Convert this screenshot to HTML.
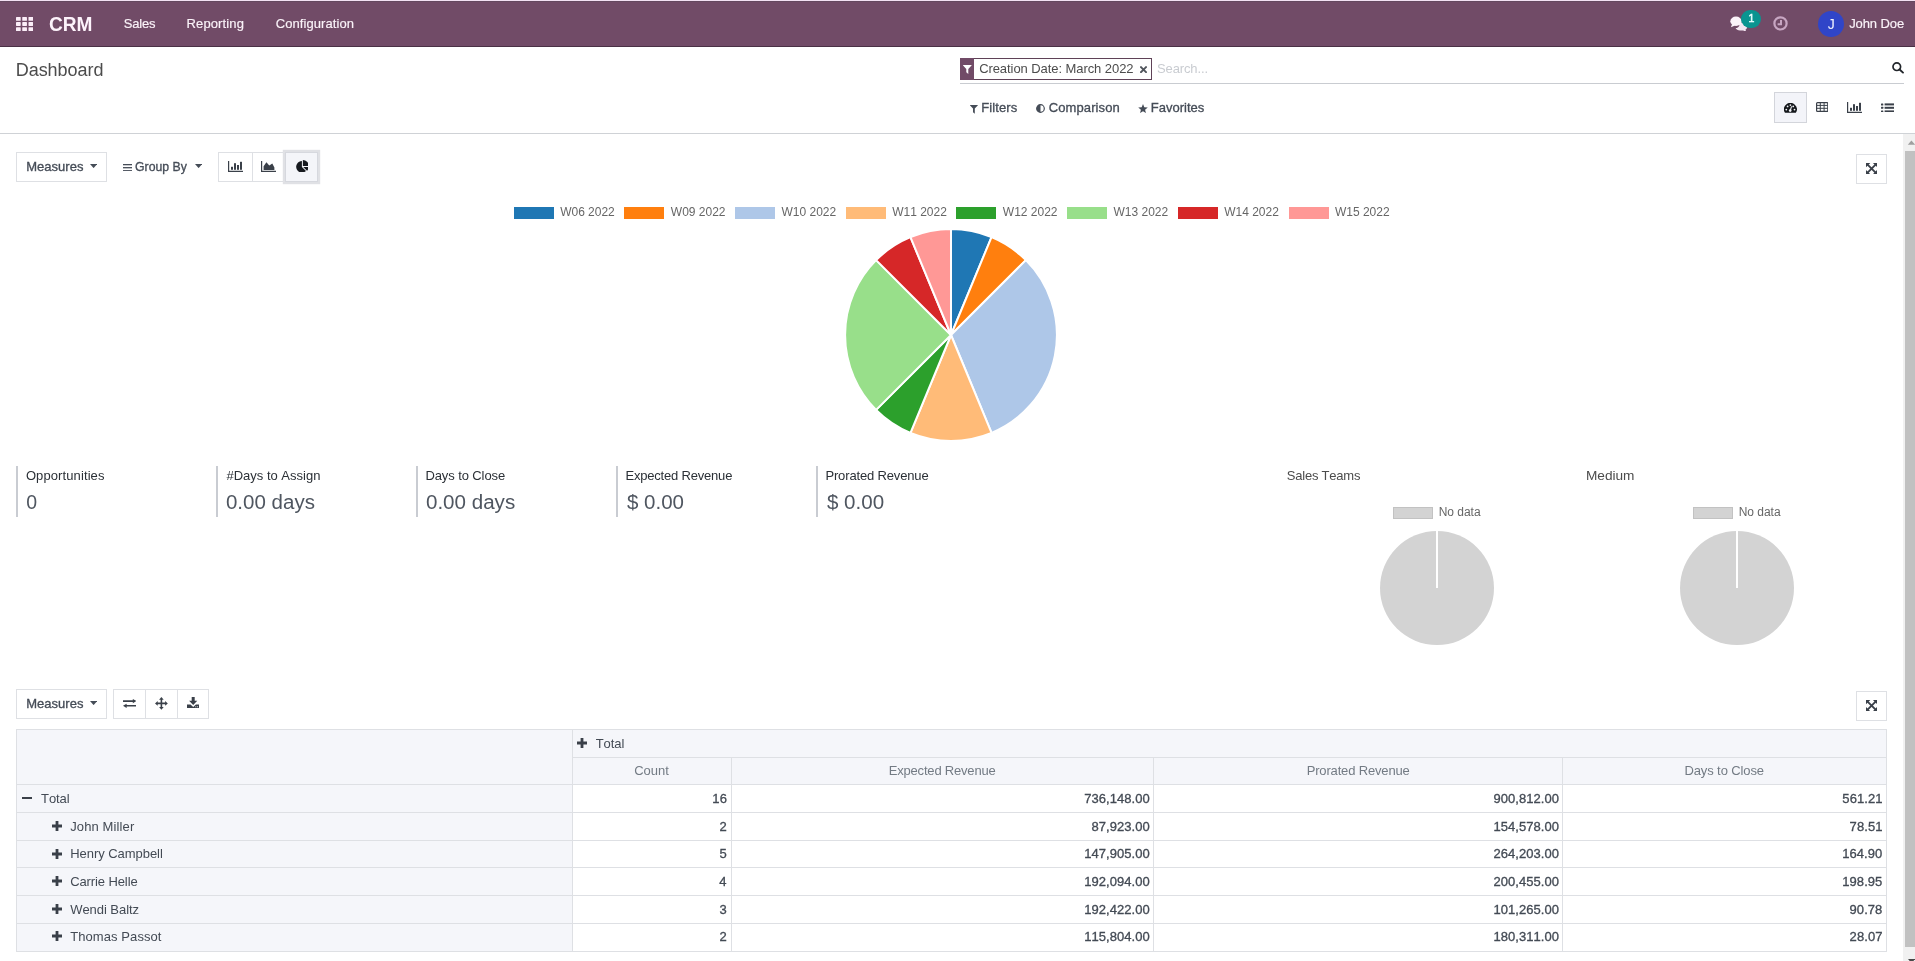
<!DOCTYPE html>
<html lang="en"><head><meta charset="utf-8"><title>Odoo - Dashboard</title>
<style>
html,body{margin:0;padding:0}
body{width:1915px;height:961px;overflow:hidden;position:relative;background:#fff;font-family:"Liberation Sans",sans-serif;font-kerning:none;-webkit-font-smoothing:antialiased}
.b{position:absolute;display:block;box-sizing:border-box}
.t{position:absolute;display:block;white-space:pre;font-kerning:none}
#app{position:absolute;left:0;top:0;width:1915px;height:961px;will-change:transform}
</style></head><body><div id="app">
<div class="b" style="left:0px;top:0px;width:1915px;height:1px;background:#f3e1f3"></div>
<div class="b" style="left:0px;top:1px;width:1915px;height:46px;background:#714B67;border-bottom:1px solid #4a3145"></div>
<div class="b" style="left:0px;top:1px;width:1915px;height:1px;background:#64485f"></div>
<svg class="b" style="left:16px;top:17px;" width="17.2" height="14" viewBox="0 0 17.2 14"><rect x="0" y="0" width="4.7" height="3.8" rx="0.6" fill="#fbeef8"/><rect x="6.25" y="0" width="4.7" height="3.8" rx="0.6" fill="#fbeef8"/><rect x="12.5" y="0" width="4.7" height="3.8" rx="0.6" fill="#fbeef8"/><rect x="0" y="5.1" width="4.7" height="3.8" rx="0.6" fill="#fbeef8"/><rect x="6.25" y="5.1" width="4.7" height="3.8" rx="0.6" fill="#fbeef8"/><rect x="12.5" y="5.1" width="4.7" height="3.8" rx="0.6" fill="#fbeef8"/><rect x="0" y="10.2" width="4.7" height="3.8" rx="0.6" fill="#fbeef8"/><rect x="6.25" y="10.2" width="4.7" height="3.8" rx="0.6" fill="#fbeef8"/><rect x="12.5" y="10.2" width="4.7" height="3.8" rx="0.6" fill="#fbeef8"/></svg>
<span class="t" style="left:48.98px;top:14.00px;font-size:20px;line-height:20px;color:#fdf3fb;font-weight:bold;transform:scaleX(0.9542);transform-origin:0.82px 0;">CRM</span>
<span class="t" style="left:123.74px;top:17.10px;font-size:13px;line-height:13px;color:#fbf3f9;font-weight:normal;-webkit-text-stroke:0.16px #fbf3f9;letter-spacing:-0.180px;">Sales</span>
<span class="t" style="left:186.56px;top:17.10px;font-size:13px;line-height:13px;color:#fbf3f9;font-weight:normal;-webkit-text-stroke:0.16px #fbf3f9;letter-spacing:0.122px;">Reporting</span>
<span class="t" style="left:275.77px;top:17.10px;font-size:13px;line-height:13px;color:#fbf3f9;font-weight:normal;-webkit-text-stroke:0.16px #fbf3f9;letter-spacing:0.068px;">Configuration</span>
<svg class="b" style="left:1730px;top:16px;" width="18" height="15" viewBox="0 0 18 15"><path d="M12.2 6.6c-1.2 0-2.3.3-3.2.8 1.500 2.900-1.600 4.700-3.400 4.600.6 1.300 2.300 2.300 4.400 2.500l3.200.1 3.300 1.300-1.100-2.100c1.100-.7 1.800-1.800 1.800-2.900 0-2.400-2.200-4.300-5-4.300z" fill="#f4e6f1"/><ellipse cx="6" cy="5.300" rx="5.700" ry="4.700" fill="#fbf3f9"/><path d="M2 8.2L.9 11.300l4.300-1.800z" fill="#fbf3f9"/></svg>
<div class="b" style="left:1741px;top:10px;width:19.5px;height:18.2px;background:#0a9490;border-radius:9.2px"></div>
<span class="t" style="left:1748.40px;top:12.90px;font-size:10.5px;line-height:11px;color:#e7ffff;font-weight:normal;-webkit-text-stroke:0.55px #e7ffff;">1</span>
<svg class="b" style="left:1773px;top:16px;" width="15" height="15" viewBox="0 0 15 15"><circle cx="7.5" cy="7.4" r="6.1" fill="none" stroke="#c7a6c2" stroke-width="2.2"/><path d="M8 3.900V8.300H4.600" fill="none" stroke="#c7a6c2" stroke-width="2"/></svg>
<div class="b" style="left:1818px;top:11px;width:26px;height:26px;background:#3045c8;border-radius:13px"></div>
<span class="t" style="left:1827.68px;top:17.20px;font-size:14px;line-height:14px;color:#f4f6ff;font-weight:normal;">J</span>
<span class="t" style="left:1849.23px;top:17.10px;font-size:13px;line-height:13px;color:#fbf3f9;font-weight:normal;-webkit-text-stroke:0.16px #fbf3f9;letter-spacing:-0.104px;">John Doe</span>
<div class="b" style="left:0px;top:133px;width:1915px;height:1px;background:#cfd2d6"></div>
<span class="t" style="left:15.72px;top:60.90px;font-size:18px;line-height:18px;color:#4c4c4c;font-weight:normal;letter-spacing:-0.040px;">Dashboard</span>
<div class="b" style="left:960px;top:58px;width:192px;height:22px;border:1px solid #5f4257;background:#fff"></div>
<div class="b" style="left:960px;top:58px;width:14px;height:22px;background:#714B67"></div>
<svg class="b" style="left:963px;top:64.8px;" width="8.6" height="9" viewBox="0 0 8.6 9"><path d="M.2 0h8.200c.3 0 .3.300.1.500L5.300 3.900V8.900L3.300 7.300V3.900L.1.500C-.1.300-.1 0 .2 0z" fill="#fff"/></svg>
<span class="t" style="left:979.14px;top:62.10px;font-size:13px;line-height:13px;color:#4c4c4c;font-weight:normal;letter-spacing:-0.070px;">Creation Date: March 2022</span>
<svg class="b" style="left:1140px;top:66px;" width="7" height="7.4" viewBox="0 0 7 7.4"><path d="M1 1.200L6 6.200M6 1.200L1 6.200" stroke="#50555c" stroke-width="1.900" stroke-linecap="square"/></svg>
<span class="t" style="left:1157.01px;top:62.10px;font-size:13px;line-height:13px;color:#c9ccd1;font-weight:normal;letter-spacing:-0.119px;">Search...</span>
<svg class="b" style="left:1891.8px;top:62.2px;" width="12.2" height="11.6" viewBox="0 0 12.2 11.6"><circle cx="4.800" cy="4.700" r="3.800" fill="none" stroke="#22262b" stroke-width="1.700"/><path d="M7.600 7.500L11 10.600" stroke="#22262b" stroke-width="1.900" stroke-linecap="round"/></svg>
<div class="b" style="left:960px;top:83px;width:944px;height:1px;background:#c9ccd1"></div>
<svg class="b" style="left:970px;top:105px;" width="7.8" height="8.8" viewBox="0 0 7.8 8.8"><path d="M.2 0h7.400c.3 0 .3.300.1.500L4.800 3.600V8.700L3 7.200V3.600L.1.500C-.1.300-.1 0 .2 0z" fill="#454c57"/></svg>
<span class="t" style="left:981.14px;top:101.10px;font-size:13px;line-height:13px;color:#454c57;font-weight:normal;-webkit-text-stroke:0.32px #454c57;letter-spacing:0.138px;">Filters</span>
<svg class="b" style="left:1036.3px;top:104px;" width="9" height="9" viewBox="0 0 9 9"><circle cx="4.500" cy="4.500" r="3.800" fill="#fff" stroke="#454c57" stroke-width="1.200"/><path d="M4.500.7a3.800 3.800 0 0 0 0 7.600z" fill="#454c57"/></svg>
<span class="t" style="left:1048.65px;top:101.10px;font-size:13px;line-height:13px;color:#454c57;font-weight:normal;-webkit-text-stroke:0.32px #454c57;letter-spacing:0.122px;">Comparison</span>
<svg class="b" style="left:1138px;top:103.6px;" width="10" height="9.4" viewBox="0 0 10 9.4"><polygon points="5.00,0.00 6.29,3.22 9.76,3.45 7.09,5.68 7.94,9.05 5.00,7.20 2.06,9.05 2.91,5.68 0.24,3.45 3.71,3.22" fill="#454c57"/></svg>
<span class="t" style="left:1150.84px;top:101.10px;font-size:13px;line-height:13px;color:#454c57;font-weight:normal;-webkit-text-stroke:0.32px #454c57;letter-spacing:0.007px;">Favorites</span>
<div class="b" style="left:1774px;top:92px;width:33px;height:31px;background:#f3f4f9;border:1px solid #d3d5db"></div>
<svg class="b" style="left:1784.2px;top:103px;" width="12.8" height="9.8" viewBox="0 0 12.8 9.8"><path d="M.98 9.800A6.400 6.400 0 1 1 11.820 9.800z" fill="#14171b"/><g fill="#f3f4f9"><circle cx="2.300" cy="6.600" r=".9"/><circle cx="3.600" cy="3.400" r=".9"/><circle cx="6.400" cy="2.100" r=".9"/><circle cx="9.200" cy="3.400" r=".9"/><circle cx="10.500" cy="6.600" r=".9"/><circle cx="6.200" cy="7.600" r="1.350"/></g><path d="M6.200 7.600L7.600 3.300" stroke="#f3f4f9" stroke-width="1.100"/></svg>
<svg class="b" style="left:1816px;top:102px;" width="12.4" height="10" viewBox="0 0 12.4 10"><rect x=".6" y=".6" width="11.200" height="8.800" rx=".9" fill="none" stroke="#3a4049" stroke-width="1.200"/><path d="M.6 3.400H11.800M.6 6.300H11.800M4.300 .6V9.400M8.100 .6V9.400" stroke="#3a4049" stroke-width="1"/></svg>
<svg class="b" style="left:1847px;top:102px;" width="15.4" height="11.2" viewBox="0 0 15.4 11.2"><path d="M.6 0V10.4H15" fill="none" stroke="#3a4049" stroke-width="1.200"/><g fill="#3a4049"><rect x="3" y="5.800000000000001" width="2" height="3"/><rect x="6" y="2.200000000000001" width="2" height="6.6"/><rect x="9" y="4.000000000000001" width="2" height="4.8"/><rect x="12" y="0.8000000000000007" width="2" height="8"/></g></svg>
<svg class="b" style="left:1881px;top:102.6px;" width="13.4" height="9.8" viewBox="0 0 13.4 9.8"><rect x="0" y="0.3999999999999999" width="2.300" height="2" rx=".5" fill="#3a4049"/><rect x="3.600" y="0.3999999999999999" width="9.800" height="2" fill="#3a4049"/><rect x="0" y="3.8" width="2.300" height="2" rx=".5" fill="#3a4049"/><rect x="3.600" y="3.8" width="9.800" height="2" fill="#3a4049"/><rect x="0" y="7.4" width="2.300" height="2" rx=".5" fill="#3a4049"/><rect x="3.600" y="7.4" width="9.800" height="2" fill="#3a4049"/></svg>
<div class="b" style="left:1903px;top:134px;width:12px;height:827px;background:#f1f1f1"></div>
<div class="b" style="left:1905px;top:151px;width:10px;height:796px;background:#c1c1c1"></div>
<svg class="b" style="left:1907px;top:140px;" width="8" height="5" viewBox="0 0 8 5"><polygon points="0.800,4.800 8,4.800 8,4.400 4.400,0.500" fill="#a0a0a0"/></svg>
<svg class="b" style="left:1907px;top:959px;" width="8" height="2" viewBox="0 0 8 2"><polygon points="1,0 8,0 8,0.300 4.400,4" fill="#484848"/></svg>
<div class="b" style="left:16px;top:152px;width:91px;height:30px;border:1px solid #dee0e4;background:#fff"></div>
<span class="t" style="left:26.14px;top:159.80px;font-size:13px;line-height:13px;color:#454c57;font-weight:normal;-webkit-text-stroke:0.32px #454c57;letter-spacing:0.034px;">Measures</span>
<svg class="b" style="left:90px;top:164.4px;" width="7.2" height="4.1" viewBox="0 0 7.2 4.1"><polygon points="0,0 7.200,0 3.600,4.100" fill="#454c57"/></svg>
<svg class="b" style="left:123px;top:163.6px;" width="9" height="7.4" viewBox="0 0 9 7.4"><rect x="0" y="0" width="9" height="1.300" fill="#454c57"/><rect x="0" y="3.05" width="9" height="1.300" fill="#454c57"/><rect x="0" y="6.1" width="9" height="1.300" fill="#454c57"/></svg>
<span class="t" style="left:135.46px;top:159.80px;font-size:13px;line-height:13px;color:#454c57;font-weight:normal;-webkit-text-stroke:0.32px #454c57;transform:scaleX(0.9437);transform-origin:0.65px 0;">Group By</span>
<svg class="b" style="left:194.8px;top:164.4px;" width="7.2" height="4.1" viewBox="0 0 7.2 4.1"><polygon points="0,0 7.200,0 3.600,4.100" fill="#454c57"/></svg>
<div class="b" style="left:218px;top:152px;width:100px;height:30px;border:1px solid #dee0e4;background:#fff"></div>
<div class="b" style="left:252px;top:152px;width:1px;height:30px;background:#dee0e4"></div>
<div class="b" style="left:285px;top:152px;width:33px;height:30px;background:#f4f5f9;border:1px solid #d6d8de;box-shadow:0 0 0 2.200px #e0e1e5"></div>
<svg class="b" style="left:228px;top:161px;" width="15.4" height="11.2" viewBox="0 0 15.4 11.2"><path d="M.6 0V10.4H15" fill="none" stroke="#3a4049" stroke-width="1.200"/><g fill="#3a4049"><rect x="3" y="5.800000000000001" width="2" height="3"/><rect x="6" y="2.200000000000001" width="2" height="6.6"/><rect x="9" y="4.000000000000001" width="2" height="4.8"/><rect x="12" y="0.8000000000000007" width="2" height="8"/></g></svg>
<svg class="b" style="left:261.4px;top:161px;" width="15.4" height="11.2" viewBox="0 0 15.4 11.2"><path d="M.6 0V10.400H15" fill="none" stroke="#3a4049" stroke-width="1.200"/><polygon points="2.600,8.900 2.600,5.200 5.400,1.300 8.300,4.600 11.300,2.600 13.400,6.600 13.400,8.900" fill="#3a4049"/></svg>
<svg class="b" style="left:295.6px;top:159.6px;" width="12.8" height="12.6" viewBox="0 0 12.8 12.6"><path d="M5.900 6.900V1.100A5.750 5.750 0 1 0 10 10.900z" fill="#171a1f"/><path d="M6.900 5.900V0A5.900 5.900 0 0 1 12.800 5.900z" fill="#171a1f"/><path d="M7.300 6.900H12.700A5.800 5.800 0 0 1 11 10.700z" fill="#171a1f"/></svg>
<div class="b" style="left:1856px;top:154px;width:31px;height:30px;border:1px solid #dee0e4;background:#fff"></div>
<svg class="b" style="left:1865.9px;top:162.9px;" width="11.2" height="11.2" viewBox="0 0 11.2 11.2"><path d="M1.600 1.600L9.600 9.600M9.600 1.600L1.600 9.600" stroke="#3a4049" stroke-width="1.900"/><g fill="#3a4049"><polygon points="0,0 4.300,0 0,4.300"/><polygon points="11.200,0 6.900,0 11.200,4.300"/><polygon points="0,11.200 4.300,11.200 0,6.900"/><polygon points="11.200,11.200 6.900,11.200 11.200,6.900"/></g></svg>
<div class="b" style="left:513.7px;top:207px;width:40px;height:12px;background:#1f77b4"></div>
<span class="t" style="left:560.15px;top:205.70px;font-size:12px;line-height:12px;color:#666;font-weight:normal;letter-spacing:-0.007px;">W06 2022</span>
<div class="b" style="left:624.4px;top:207px;width:40px;height:12px;background:#ff7f0e"></div>
<span class="t" style="left:670.83px;top:205.70px;font-size:12px;line-height:12px;color:#666;font-weight:normal;letter-spacing:-0.007px;">W09 2022</span>
<div class="b" style="left:735.1px;top:207px;width:40px;height:12px;background:#aec7e8"></div>
<span class="t" style="left:781.51px;top:205.70px;font-size:12px;line-height:12px;color:#666;font-weight:normal;letter-spacing:-0.007px;">W10 2022</span>
<div class="b" style="left:845.7px;top:207px;width:40px;height:12px;background:#ffbb78"></div>
<span class="t" style="left:892.19px;top:205.70px;font-size:12px;line-height:12px;color:#666;font-weight:normal;letter-spacing:-0.007px;">W11 2022</span>
<div class="b" style="left:956.4px;top:207px;width:40px;height:12px;background:#2ca02c"></div>
<span class="t" style="left:1002.87px;top:205.70px;font-size:12px;line-height:12px;color:#666;font-weight:normal;letter-spacing:-0.007px;">W12 2022</span>
<div class="b" style="left:1067.1px;top:207px;width:40px;height:12px;background:#98df8a"></div>
<span class="t" style="left:1113.55px;top:205.70px;font-size:12px;line-height:12px;color:#666;font-weight:normal;letter-spacing:-0.007px;">W13 2022</span>
<div class="b" style="left:1177.8px;top:207px;width:40px;height:12px;background:#d62728"></div>
<span class="t" style="left:1224.23px;top:205.70px;font-size:12px;line-height:12px;color:#666;font-weight:normal;letter-spacing:-0.007px;">W14 2022</span>
<div class="b" style="left:1288.5px;top:207px;width:40px;height:12px;background:#ff9896"></div>
<span class="t" style="left:1334.91px;top:205.70px;font-size:12px;line-height:12px;color:#666;font-weight:normal;letter-spacing:-0.007px;">W15 2022</span>
<svg class="b" style="left:836.20px;top:220.00px;" width="230" height="230" viewBox="0 0 230 230"><path d="M115.0 115.0L115.00 9.10A105.9 105.9 0 0 1 155.53 17.16Z" fill="#1f77b4" stroke="#fff" stroke-width="2" stroke-linejoin="bevel"/><path d="M115.0 115.0L155.53 17.16A105.9 105.9 0 0 1 189.88 40.12Z" fill="#ff7f0e" stroke="#fff" stroke-width="2" stroke-linejoin="bevel"/><path d="M115.0 115.0L189.88 40.12A105.9 105.9 0 0 1 155.53 212.84Z" fill="#aec7e8" stroke="#fff" stroke-width="2" stroke-linejoin="bevel"/><path d="M115.0 115.0L155.53 212.84A105.9 105.9 0 0 1 74.47 212.84Z" fill="#ffbb78" stroke="#fff" stroke-width="2" stroke-linejoin="bevel"/><path d="M115.0 115.0L74.47 212.84A105.9 105.9 0 0 1 40.12 189.88Z" fill="#2ca02c" stroke="#fff" stroke-width="2" stroke-linejoin="bevel"/><path d="M115.0 115.0L40.12 189.88A105.9 105.9 0 0 1 40.12 40.12Z" fill="#98df8a" stroke="#fff" stroke-width="2" stroke-linejoin="bevel"/><path d="M115.0 115.0L40.12 40.12A105.9 105.9 0 0 1 74.47 17.16Z" fill="#d62728" stroke="#fff" stroke-width="2" stroke-linejoin="bevel"/><path d="M115.0 115.0L74.47 17.16A105.9 105.9 0 0 1 115.00 9.10Z" fill="#ff9896" stroke="#fff" stroke-width="2" stroke-linejoin="bevel"/></svg>
<div class="b" style="left:16px;top:466px;width:2px;height:51px;background:#c9ccd2"></div>
<span class="t" style="left:25.88px;top:468.80px;font-size:13px;line-height:13px;color:#2b3036;font-weight:normal;letter-spacing:0.105px;">Opportunities</span>
<span class="t" style="left:26.14px;top:491.60px;font-size:19.5px;line-height:20px;color:#4f5660;font-weight:normal;">0</span>
<div class="b" style="left:216px;top:466px;width:2px;height:51px;background:#c9ccd2"></div>
<span class="t" style="left:226.44px;top:468.80px;font-size:13px;line-height:13px;color:#2b3036;font-weight:normal;">#Days to Assign</span>
<span class="t" style="left:226.14px;top:491.60px;font-size:19.5px;line-height:20px;color:#4f5660;font-weight:normal;transform:scaleX(1.0518);transform-origin:0.76px 0;">0.00 days</span>
<div class="b" style="left:416px;top:466px;width:2px;height:51px;background:#c9ccd2"></div>
<span class="t" style="left:425.43px;top:468.80px;font-size:13px;line-height:13px;color:#2b3036;font-weight:normal;letter-spacing:-0.098px;">Days to Close</span>
<span class="t" style="left:426.14px;top:491.60px;font-size:19.5px;line-height:20px;color:#4f5660;font-weight:normal;transform:scaleX(1.0554);transform-origin:0.76px 0;">0.00 days</span>
<div class="b" style="left:616px;top:466px;width:2px;height:51px;background:#c9ccd2"></div>
<span class="t" style="left:625.43px;top:468.80px;font-size:13px;line-height:13px;color:#2b3036;font-weight:normal;letter-spacing:-0.194px;">Expected Revenue</span>
<span class="t" style="left:626.69px;top:491.60px;font-size:19.5px;line-height:20px;color:#4f5660;font-weight:normal;transform:scaleX(1.0518);transform-origin:0.21px 0;">$ 0.00</span>
<div class="b" style="left:816px;top:466px;width:2px;height:51px;background:#c9ccd2"></div>
<span class="t" style="left:825.43px;top:468.80px;font-size:13px;line-height:13px;color:#2b3036;font-weight:normal;letter-spacing:-0.151px;">Prorated Revenue</span>
<span class="t" style="left:826.69px;top:491.60px;font-size:19.5px;line-height:20px;color:#4f5660;font-weight:normal;transform:scaleX(1.0536);transform-origin:0.21px 0;">$ 0.00</span>
<span class="t" style="left:1286.81px;top:468.80px;font-size:13px;line-height:13px;color:#4c4c4c;font-weight:normal;letter-spacing:-0.220px;">Sales Teams</span>
<span class="t" style="left:1586.43px;top:468.80px;font-size:13px;line-height:13px;color:#4c4c4c;font-weight:normal;transform:scaleX(1.0494);transform-origin:1.07px 0;">Medium</span>
<div class="b" style="left:1393px;top:507px;width:40px;height:12px;background:#d3d3d3;border:1px solid #c2c2c2"></div>
<span class="t" style="left:1438.72px;top:505.70px;font-size:12px;line-height:12px;color:#666;font-weight:normal;letter-spacing:-0.024px;">No data</span>
<svg class="b" style="left:1379px;top:530px;" width="116" height="116" viewBox="0 0 116 116"><circle cx="58" cy="58" r="57" fill="#d3d3d3"/><path d="M58 58V0" stroke="#fff" stroke-width="2"/></svg>
<div class="b" style="left:1693px;top:507px;width:40px;height:12px;background:#d3d3d3;border:1px solid #c2c2c2"></div>
<span class="t" style="left:1738.72px;top:505.70px;font-size:12px;line-height:12px;color:#666;font-weight:normal;letter-spacing:-0.024px;">No data</span>
<svg class="b" style="left:1679px;top:530px;" width="116" height="116" viewBox="0 0 116 116"><circle cx="58" cy="58" r="57" fill="#d3d3d3"/><path d="M58 58V0" stroke="#fff" stroke-width="2"/></svg>
<div class="b" style="left:16px;top:689px;width:91px;height:30px;border:1px solid #dee0e4;background:#fff"></div>
<span class="t" style="left:26.14px;top:696.80px;font-size:13px;line-height:13px;color:#454c57;font-weight:normal;-webkit-text-stroke:0.32px #454c57;letter-spacing:0.034px;">Measures</span>
<svg class="b" style="left:90px;top:701.4px;" width="7.2" height="4.1" viewBox="0 0 7.2 4.1"><polygon points="0,0 7.200,0 3.600,4.100" fill="#454c57"/></svg>
<div class="b" style="left:113px;top:689px;width:96px;height:30px;border:1px solid #dee0e4;background:#fff"></div>
<div class="b" style="left:145px;top:689px;width:1px;height:30px;background:#dee0e4"></div>
<div class="b" style="left:177px;top:689px;width:1px;height:30px;background:#dee0e4"></div>
<svg class="b" style="left:123px;top:699.2px;" width="13.4" height="8.9" viewBox="0 0 13.4 8.9"><path d="M0 2.100H10.500M2.900 6.800H13.400" stroke="#3a4049" stroke-width="1.600"/><polygon points="9.800,0 13.400,2.100 9.800,4.200" fill="#3a4049"/><polygon points="3.600,4.700 0,6.800 3.600,8.900" fill="#3a4049"/></svg>
<svg class="b" style="left:155.4px;top:696.8px;" width="12.8" height="12.8" viewBox="0 0 12.800 12.800"><path d="M6.400 2V10.800M2 6.400H10.800" stroke="#3a4049" stroke-width="1.600"/><g fill="#3a4049"><polygon points="6.400,0 8.700,2.700 4.100,2.700"/><polygon points="6.400,12.800 8.700,10.100 4.100,10.100"/><polygon points="0,6.400 2.700,4.100 2.700,8.700"/><polygon points="12.800,6.400 10.100,4.100 10.100,8.700"/></g></svg>
<svg class="b" style="left:187px;top:696.8px;" width="12.4" height="11.2" viewBox="0 0 12.400 11.200"><path d="M4.700 0H7.700V3.700H10.300L6.200 7.900L2.100 3.700H4.700z" fill="#3a4049"/><path d="M0 7.400H3.500L6.200 10L8.900 7.400H12.400V11.200H0z" fill="#3a4049"/><circle cx="10.500" cy="9.700" r=".5" fill="#fff"/><circle cx="8.800" cy="9.700" r=".5" fill="#fff"/></svg>
<div class="b" style="left:1856px;top:691px;width:31px;height:30px;border:1px solid #dee0e4;background:#fff"></div>
<svg class="b" style="left:1865.9px;top:699.9px;" width="11.2" height="11.2" viewBox="0 0 11.2 11.2"><path d="M1.600 1.600L9.600 9.600M9.600 1.600L1.600 9.600" stroke="#3a4049" stroke-width="1.900"/><g fill="#3a4049"><polygon points="0,0 4.300,0 0,4.300"/><polygon points="11.200,0 6.900,0 11.200,4.300"/><polygon points="0,11.200 4.300,11.200 0,6.900"/><polygon points="11.200,11.200 6.900,11.200 11.200,6.900"/></g></svg>
<div class="b" style="left:16px;top:729px;width:1871px;height:56px;background:#f5f6fa"></div>
<div class="b" style="left:16px;top:784px;width:557px;height:168px;background:#f5f6fa"></div>
<div class="b" style="left:16px;top:729px;width:1871px;height:1px;background:#dee0e4"></div>
<div class="b" style="left:572px;top:757px;width:1315px;height:1px;background:#dee0e4"></div>
<div class="b" style="left:16px;top:784px;width:1871px;height:1px;background:#dee0e4"></div>
<div class="b" style="left:16px;top:812px;width:1871px;height:1px;background:#dee0e4"></div>
<div class="b" style="left:16px;top:840px;width:1871px;height:1px;background:#dee0e4"></div>
<div class="b" style="left:16px;top:867px;width:1871px;height:1px;background:#dee0e4"></div>
<div class="b" style="left:16px;top:895px;width:1871px;height:1px;background:#dee0e4"></div>
<div class="b" style="left:16px;top:923px;width:1871px;height:1px;background:#dee0e4"></div>
<div class="b" style="left:16px;top:951px;width:1871px;height:1px;background:#dee0e4"></div>
<div class="b" style="left:16px;top:729px;width:1px;height:223px;background:#dee0e4"></div>
<div class="b" style="left:572px;top:729px;width:1px;height:223px;background:#dee0e4"></div>
<div class="b" style="left:1886px;top:729px;width:1px;height:223px;background:#dee0e4"></div>
<div class="b" style="left:731px;top:757px;width:1px;height:195px;background:#dee0e4"></div>
<div class="b" style="left:1153px;top:757px;width:1px;height:195px;background:#dee0e4"></div>
<div class="b" style="left:1562px;top:757px;width:1px;height:195px;background:#dee0e4"></div>
<svg class="b" style="left:576.9px;top:738.2px;" width="10" height="10" viewBox="0 0 10 10"><path d="M5 0V10M0 5H10" stroke="#3a4049" stroke-width="2.800"/></svg>
<span class="t" style="left:595.71px;top:736.80px;font-size:13px;line-height:13px;color:#434a54;font-weight:normal;letter-spacing:-0.060px;">Total</span>
<span class="t" style="left:634.19px;top:764.20px;font-size:13px;line-height:13px;color:#737b84;font-weight:normal;letter-spacing:-0.009px;">Count</span>
<span class="t" style="left:888.78px;top:764.20px;font-size:13px;line-height:13px;color:#737b84;font-weight:normal;letter-spacing:-0.194px;">Expected Revenue</span>
<span class="t" style="left:1306.68px;top:764.20px;font-size:13px;line-height:13px;color:#737b84;font-weight:normal;letter-spacing:-0.158px;">Prorated Revenue</span>
<span class="t" style="left:1684.43px;top:764.20px;font-size:13px;line-height:13px;color:#737b84;font-weight:normal;letter-spacing:-0.106px;">Days to Close</span>
<svg class="b" style="left:22px;top:796.5px;" width="10" height="2.8" viewBox="0 0 10 2.8"><path d="M0 1.400H10" stroke="#3a4049" stroke-width="2.800"/></svg>
<span class="t" style="left:41.11px;top:791.80px;font-size:13px;line-height:13px;color:#434a54;font-weight:normal;letter-spacing:-0.110px;">Total</span>
<span class="t" style="left:712.21px;top:791.80px;font-size:13px;line-height:13px;color:#434a54;font-weight:normal;-webkit-text-stroke:0.32px #434a54;letter-spacing:0.300px;">16</span>
<span class="t" style="left:1084.34px;top:791.80px;font-size:13px;line-height:13px;color:#434a54;font-weight:normal;-webkit-text-stroke:0.32px #434a54;letter-spacing:0.033px;">736,148.00</span>
<span class="t" style="left:1493.54px;top:791.80px;font-size:13px;line-height:13px;color:#434a54;font-weight:normal;-webkit-text-stroke:0.32px #434a54;letter-spacing:0.033px;">900,812.00</span>
<span class="t" style="left:1842.37px;top:791.80px;font-size:13px;line-height:13px;color:#434a54;font-weight:normal;-webkit-text-stroke:0.32px #434a54;letter-spacing:0.060px;">561.21</span>
<svg class="b" style="left:52.2px;top:821.1px;" width="10" height="10" viewBox="0 0 10 10"><path d="M5 0V10M0 5H10" stroke="#3a4049" stroke-width="2.800"/></svg>
<span class="t" style="left:70.20px;top:819.70px;font-size:13px;line-height:13px;color:#434a54;font-weight:normal;letter-spacing:0.126px;">John Miller</span>
<span class="t" style="left:719.52px;top:819.70px;font-size:13px;line-height:13px;color:#434a54;font-weight:normal;-webkit-text-stroke:0.32px #434a54;">2</span>
<span class="t" style="left:1091.57px;top:819.70px;font-size:13px;line-height:13px;color:#434a54;font-weight:normal;-webkit-text-stroke:0.32px #434a54;letter-spacing:0.037px;">87,923.00</span>
<span class="t" style="left:1493.54px;top:819.70px;font-size:13px;line-height:13px;color:#434a54;font-weight:normal;-webkit-text-stroke:0.32px #434a54;letter-spacing:0.033px;">154,578.00</span>
<span class="t" style="left:1849.60px;top:819.70px;font-size:13px;line-height:13px;color:#434a54;font-weight:normal;-webkit-text-stroke:0.32px #434a54;letter-spacing:0.075px;">78.51</span>
<svg class="b" style="left:52.2px;top:848.6px;" width="10" height="10" viewBox="0 0 10 10"><path d="M5 0V10M0 5H10" stroke="#3a4049" stroke-width="2.800"/></svg>
<span class="t" style="left:70.20px;top:847.20px;font-size:13px;line-height:13px;color:#434a54;font-weight:normal;letter-spacing:-0.041px;">Henry Campbell</span>
<span class="t" style="left:719.42px;top:847.20px;font-size:13px;line-height:13px;color:#434a54;font-weight:normal;-webkit-text-stroke:0.32px #434a54;">5</span>
<span class="t" style="left:1084.34px;top:847.20px;font-size:13px;line-height:13px;color:#434a54;font-weight:normal;-webkit-text-stroke:0.32px #434a54;letter-spacing:0.033px;">147,905.00</span>
<span class="t" style="left:1493.54px;top:847.20px;font-size:13px;line-height:13px;color:#434a54;font-weight:normal;-webkit-text-stroke:0.32px #434a54;letter-spacing:0.033px;">264,203.00</span>
<span class="t" style="left:1842.25px;top:847.20px;font-size:13px;line-height:13px;color:#434a54;font-weight:normal;-webkit-text-stroke:0.32px #434a54;letter-spacing:0.060px;">164.90</span>
<svg class="b" style="left:52.2px;top:876.1999999999999px;" width="10" height="10" viewBox="0 0 10 10"><path d="M5 0V10M0 5H10" stroke="#3a4049" stroke-width="2.800"/></svg>
<span class="t" style="left:70.20px;top:874.80px;font-size:13px;line-height:13px;color:#434a54;font-weight:normal;letter-spacing:-0.105px;">Carrie Helle</span>
<span class="t" style="left:719.25px;top:874.80px;font-size:13px;line-height:13px;color:#434a54;font-weight:normal;-webkit-text-stroke:0.32px #434a54;">4</span>
<span class="t" style="left:1084.34px;top:874.80px;font-size:13px;line-height:13px;color:#434a54;font-weight:normal;-webkit-text-stroke:0.32px #434a54;letter-spacing:0.033px;">192,094.00</span>
<span class="t" style="left:1493.54px;top:874.80px;font-size:13px;line-height:13px;color:#434a54;font-weight:normal;-webkit-text-stroke:0.32px #434a54;letter-spacing:0.033px;">200,455.00</span>
<span class="t" style="left:1842.28px;top:874.80px;font-size:13px;line-height:13px;color:#434a54;font-weight:normal;-webkit-text-stroke:0.32px #434a54;letter-spacing:0.060px;">198.95</span>
<svg class="b" style="left:52.2px;top:904.0px;" width="10" height="10" viewBox="0 0 10 10"><path d="M5 0V10M0 5H10" stroke="#3a4049" stroke-width="2.800"/></svg>
<span class="t" style="left:70.20px;top:902.60px;font-size:13px;line-height:13px;color:#434a54;font-weight:normal;letter-spacing:-0.051px;">Wendi Baltz</span>
<span class="t" style="left:719.44px;top:902.60px;font-size:13px;line-height:13px;color:#434a54;font-weight:normal;-webkit-text-stroke:0.32px #434a54;">3</span>
<span class="t" style="left:1084.34px;top:902.60px;font-size:13px;line-height:13px;color:#434a54;font-weight:normal;-webkit-text-stroke:0.32px #434a54;letter-spacing:0.033px;">192,422.00</span>
<span class="t" style="left:1493.54px;top:902.60px;font-size:13px;line-height:13px;color:#434a54;font-weight:normal;-webkit-text-stroke:0.32px #434a54;letter-spacing:0.033px;">101,265.00</span>
<span class="t" style="left:1849.53px;top:902.60px;font-size:13px;line-height:13px;color:#434a54;font-weight:normal;-webkit-text-stroke:0.32px #434a54;letter-spacing:0.075px;">90.78</span>
<svg class="b" style="left:52.2px;top:931.4px;" width="10" height="10" viewBox="0 0 10 10"><path d="M5 0V10M0 5H10" stroke="#3a4049" stroke-width="2.800"/></svg>
<span class="t" style="left:70.20px;top:930.00px;font-size:13px;line-height:13px;color:#434a54;font-weight:normal;letter-spacing:0.082px;">Thomas Passot</span>
<span class="t" style="left:719.52px;top:930.00px;font-size:13px;line-height:13px;color:#434a54;font-weight:normal;-webkit-text-stroke:0.32px #434a54;">2</span>
<span class="t" style="left:1084.34px;top:930.00px;font-size:13px;line-height:13px;color:#434a54;font-weight:normal;-webkit-text-stroke:0.32px #434a54;letter-spacing:0.033px;">115,804.00</span>
<span class="t" style="left:1493.54px;top:930.00px;font-size:13px;line-height:13px;color:#434a54;font-weight:normal;-webkit-text-stroke:0.32px #434a54;letter-spacing:0.033px;">180,311.00</span>
<span class="t" style="left:1849.62px;top:930.00px;font-size:13px;line-height:13px;color:#434a54;font-weight:normal;-webkit-text-stroke:0.32px #434a54;letter-spacing:0.075px;">28.07</span>
</div></body></html>
